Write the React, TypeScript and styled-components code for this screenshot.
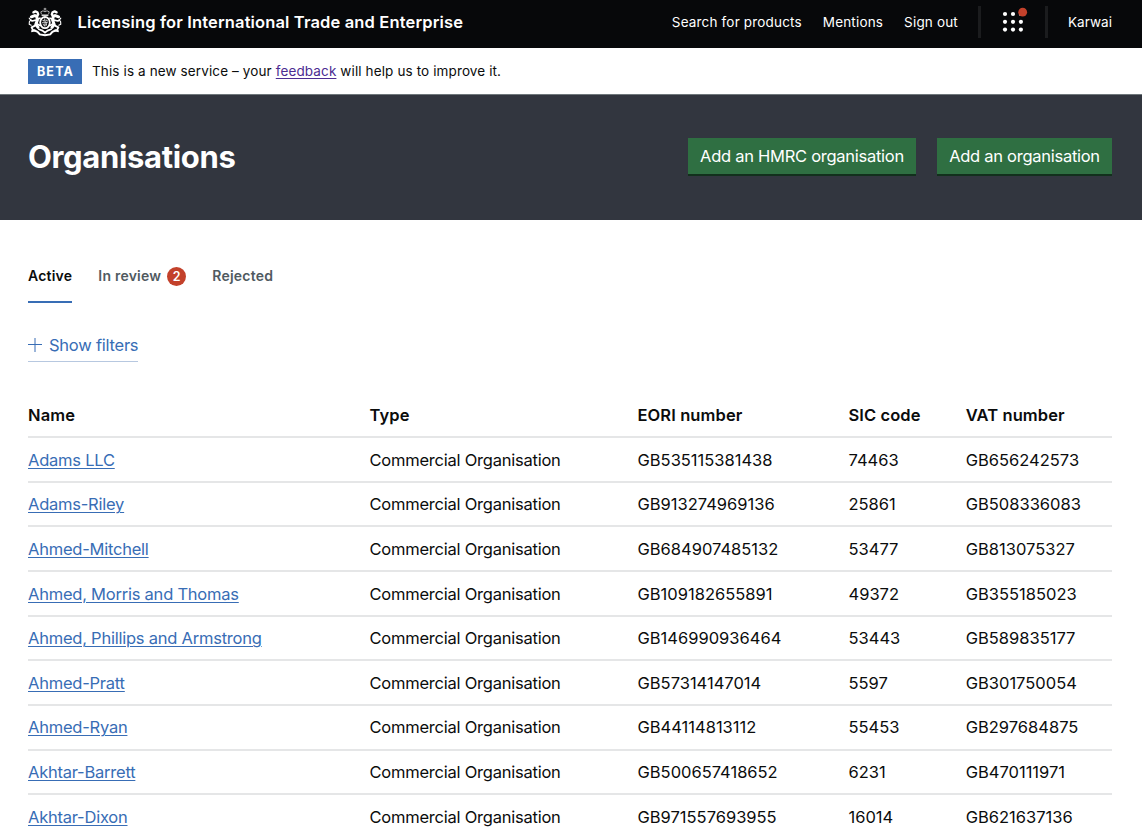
import React from "react";
import styled, { createGlobalStyle } from "styled-components";

const GlobalStyle = createGlobalStyle`
  * { box-sizing: border-box; }
  html, body { margin: 0; background: #fff; }
  body {
    height: 836px;
    overflow: hidden;
    font-family: Inter, "Liberation Sans", sans-serif;
    font-size: 16.5px;
    color: #0b0c0c;
  }
`;

const TopBar = styled.header`
  display: flex;
  align-items: center;
  height: 48px;
  padding: 0 30px 4px 28px;
  background: #07080a;
  color: #fff;
`;

const Crest = styled.svg`
  flex: none;
  width: 34px;
  height: 30px;
  margin-right: 15.5px;
`;

const ServiceName = styled.span`
  font-size: 16.5px;
  font-weight: 600;
  line-height: 24px;
  letter-spacing: 0.14px;
  white-space: nowrap;
`;

const TopNav = styled.nav`
  display: flex;
  align-items: center;
  margin-left: auto;
`;

const TopLink = styled.a<{ $gap?: number }>`
  margin-right: ${(p) => p.$gap ?? 0}px;
  font-size: 13.5px;
  line-height: 20px;
  letter-spacing: 0.17px;
  white-space: nowrap;
`;

const UserLink = styled(TopLink)`
  margin-left: 20px;
  letter-spacing: 0.05px;
`;

const Divider = styled.span`
  width: 3px;
  height: 32px;
  background: #1b1c1e;
`;

const MenuIcon = styled.svg`
  width: 26px;
  height: 26px;
  margin: 0 18px 0 20px;
  overflow: visible;
`;

const PhaseBanner = styled.div`
  display: flex;
  align-items: center;
  height: 47px;
  padding: 0 28px;
  border-bottom: 1px solid #6f777b;
`;

const PhaseTag = styled.strong`
  width: 54px;
  height: 25px;
  margin-right: 10px;
  background: #386db5;
  color: #fff;
  font-size: 12.5px;
  font-weight: 700;
  line-height: 26px;
  letter-spacing: 1.2px;
  text-align: center;
  text-indent: 1px;
`;

const PhaseText = styled.span`
  font-size: 13.5px;
  line-height: 20px;
  letter-spacing: 0.12px;
  white-space: nowrap;
`;

const VisitedLink = styled.a`
  color: #4c2c92;
  text-decoration: underline;
  text-underline-offset: 2px;
`;

const Hero = styled.section`
  display: flex;
  align-items: center;
  justify-content: space-between;
  height: 125px;
  padding: 0 30px 2px 28px;
  background: #32363f;
  color: #fff;
`;

const Title = styled.h1`
  margin: 0;
  font-size: 31px;
  font-weight: 700;
  line-height: 40px;
  letter-spacing: -0.33px;
`;

const Actions = styled.div`
  display: flex;
  gap: 21px;
`;

const Button = styled.button<{ $width: number }>`
  width: ${(p) => p.$width}px;
  height: 36px;
  margin: 0 0 2px;
  padding: 1px 0 0;
  border: 0;
  background: #2f6f42;
  box-shadow: 0 2px 0 #12301c;
  color: #fff;
  font: inherit;
  line-height: 35px;
  letter-spacing: -0.27px;
  white-space: nowrap;
`;

const Main = styled.main`
  padding: 44px 30px 0 28px;
`;

const Tabs = styled.nav`
  display: flex;
  gap: 26px;
  height: 39px;
`;

const Tab = styled.a<{ $active?: boolean }>`
  display: flex;
  gap: 6px;
  padding-bottom: 13px;
  align-items: center;
  border-bottom: 2px solid ${(p) => (p.$active ? "#386db5" : "transparent")};
  color: ${(p) => (p.$active ? "#0b0c0c" : "#505a5f")};
  font-size: 14px;
  font-weight: 600;
  line-height: 24px;
  letter-spacing: 0.22px;
  white-space: nowrap;
`;

const Count = styled.span`
  width: 19px;
  height: 19px;
  border-radius: 50%;
  background: #c3412b;
  color: #fff;
  font-size: 12.5px;
  line-height: 19px;
  letter-spacing: 0;
  text-align: center;
`;

const FilterToggle = styled.a`
  display: inline-flex;
  align-items: center;
  gap: 7px;
  height: 32px;
  margin-top: 27px;
  padding-bottom: 2px;
  border-bottom: 1px solid #b7c8e0;
  color: #386db5;
  line-height: 28px;
  letter-spacing: -0.24px;
  white-space: nowrap;
`;

const PlusIcon = styled.svg`
  width: 14px;
  height: 14px;
`;

const Table = styled.div`
  margin-top: 31px;
`;

const Row = styled.div<{ $head?: boolean }>`
  display: grid;
  grid-template-columns: 341.5px 268px 211px 117.2px 1fr;
  align-items: center;
  height: ${(p) => (p.$head ? 45 : 44.67)}px;
  padding-top: ${(p) => (p.$head ? 0 : 0.43)}px;
  border-bottom: 2px solid #e5e6e7;
  font-weight: ${(p) => (p.$head ? 600 : 400)};
  letter-spacing: ${(p) => (p.$head ? 0.1 : 0)}px;
  line-height: 24px;
  white-space: nowrap;
`;

const TextCell = styled.span`
  letter-spacing: -0.23px;
`;

const OrgLink = styled.a`
  color: #386db5;
  text-decoration: underline;
  text-decoration-thickness: 1px;
  text-underline-offset: 2px;
`;

const organisations = [
  ["Adams LLC", "GB535115381438", "74463", "GB656242573"],
  ["Adams-Riley", "GB913274969136", "25861", "GB508336083"],
  ["Ahmed-Mitchell", "GB684907485132", "53477", "GB813075327"],
  ["Ahmed, Morris and Thomas", "GB109182655891", "49372", "GB355185023"],
  ["Ahmed, Phillips and Armstrong", "GB146990936464", "53443", "GB589835177"],
  ["Ahmed-Pratt", "GB57314147014", "5597", "GB301750054"],
  ["Ahmed-Ryan", "GB44114813112", "55453", "GB297684875"],
  ["Akhtar-Barrett", "GB500657418652", "6231", "GB470111971"],
  ["Akhtar-Dixon", "GB971557693955", "16014", "GB621637136"],
];

function Supporter() {
  return (
    <g fill="none" stroke="#fff" strokeLinecap="round" strokeLinejoin="round">
      <path d="M5.4 5.4l2-1 2 .8.8 2.2-1.2 2" strokeWidth="2.3" />
      <path d="M6.8 8.6l-3.4 1.2M8.6 9l.8 4-1.6 4.4L10 20.4" strokeWidth="3" />
      <path d="M9 12.4l3-1.2M7.6 13.2l-3.4.8-1.6-1M8.4 16.6l3.6 1.8" strokeWidth="1.7" />
      <path d="M7 18.6l-3.4 1.8 1.2 2.4 2.6.8" strokeWidth="1.8" />
      <path d="M3.2 18.2l-2-1 .2-2.6 1.4-1.4-1.6-2" strokeWidth="1.1" />
    </g>
  );
}

function RoyalCrest() {
  return (
    <Crest viewBox="0 0 34 30" aria-hidden="true">
      <Supporter />
      <g transform="matrix(-1 0 0 1 34 0)">
        <Supporter />
      </g>
      <g fill="none" stroke="#fff">
        <path d="M17 .8v3M15.6 2h2.8" strokeWidth="0.8" opacity="0.8" />
        <path d="M13.4 7.2l-.6-2.4 2.2-1 2 1 2-1 2.2 1-.6 2.4" strokeWidth="1" opacity="0.65" />
        <path d="M13.6 8.2h6.8" strokeWidth="1.3" />
        <ellipse cx="17" cy="15.6" rx="4.8" ry="5.6" strokeWidth="1.8" />
        <path d="M14.6 13.2l1.6.8M18 12.8l1.6 1.4M15 17.4l1.6 1.2M18.6 16.4l-.4 2.2M16.6 11.4l.6 4.2-.4 4M14 15.8l5.6-.4" strokeWidth="1.1" opacity="0.8" />
        <path d="M3.2 24.4l3.4-.8 3 1.2 2.2 2.6 5.2.8 5.2-.8 2.2-2.6 3-1.2 3.4.8" strokeWidth="2" />
        <path d="M10.2 22l4.2 1.6 2.6 2 2.6-2L23.8 22" strokeWidth="1.7" />
      </g>
    </Crest>
  );
}

export default function App() {
  return (
    <>
      <GlobalStyle />
      <TopBar>
        <RoyalCrest />
        <ServiceName>Licensing for International Trade and Enterprise</ServiceName>
        <TopNav>
          <TopLink $gap={21}>Search for products</TopLink>
          <TopLink $gap={21}>Mentions</TopLink>
          <TopLink $gap={20}>Sign out</TopLink>
          <Divider />
          <MenuIcon viewBox="0 0 26 26" aria-hidden="true">
            <g fill="#fff">
              {[5, 12.8, 20.6].map((y) =>
                [4, 12, 19.9].map((x) => <circle key={`${x}-${y}`} cx={x} cy={y} r="2.1" />)
              )}
            </g>
            <circle cx="21.7" cy="3.2" r="4.4" fill="#c3412b" />
          </MenuIcon>
          <Divider />
          <UserLink>Karwai</UserLink>
        </TopNav>
      </TopBar>
      <PhaseBanner>
        <PhaseTag>BETA</PhaseTag>
        <PhaseText>
          This is a new service – your <VisitedLink>feedback</VisitedLink> will help us to improve it.
        </PhaseText>
      </PhaseBanner>
      <Hero>
        <Title>Organisations</Title>
        <Actions>
          <Button $width={228}>Add an HMRC organisation</Button>
          <Button $width={175}>Add an organisation</Button>
        </Actions>
      </Hero>
      <Main>
        <Tabs>
          <Tab $active>Active</Tab>
          <Tab>
            In review <Count>2</Count>
          </Tab>
          <Tab>Rejected</Tab>
        </Tabs>
        <FilterToggle>
          <PlusIcon viewBox="0 0 14 14" aria-hidden="true">
            <path d="M7 0v14M0 6.5h14" stroke="#386db5" strokeWidth="1" fill="none" />
          </PlusIcon>
          Show filters
        </FilterToggle>
        <Table>
          <Row $head>
            <span>Name</span>
            <span>Type</span>
            <span>EORI number</span>
            <span>SIC code</span>
            <span>VAT number</span>
          </Row>
          {organisations.map(([name, eori, sic, vat]) => (
            <Row key={name}>
              <TextCell>
                <OrgLink>{name}</OrgLink>
              </TextCell>
              <TextCell>Commercial Organisation</TextCell>
              <span>{eori}</span>
              <span>{sic}</span>
              <span>{vat}</span>
            </Row>
          ))}
        </Table>
      </Main>
    </>
  );
}
